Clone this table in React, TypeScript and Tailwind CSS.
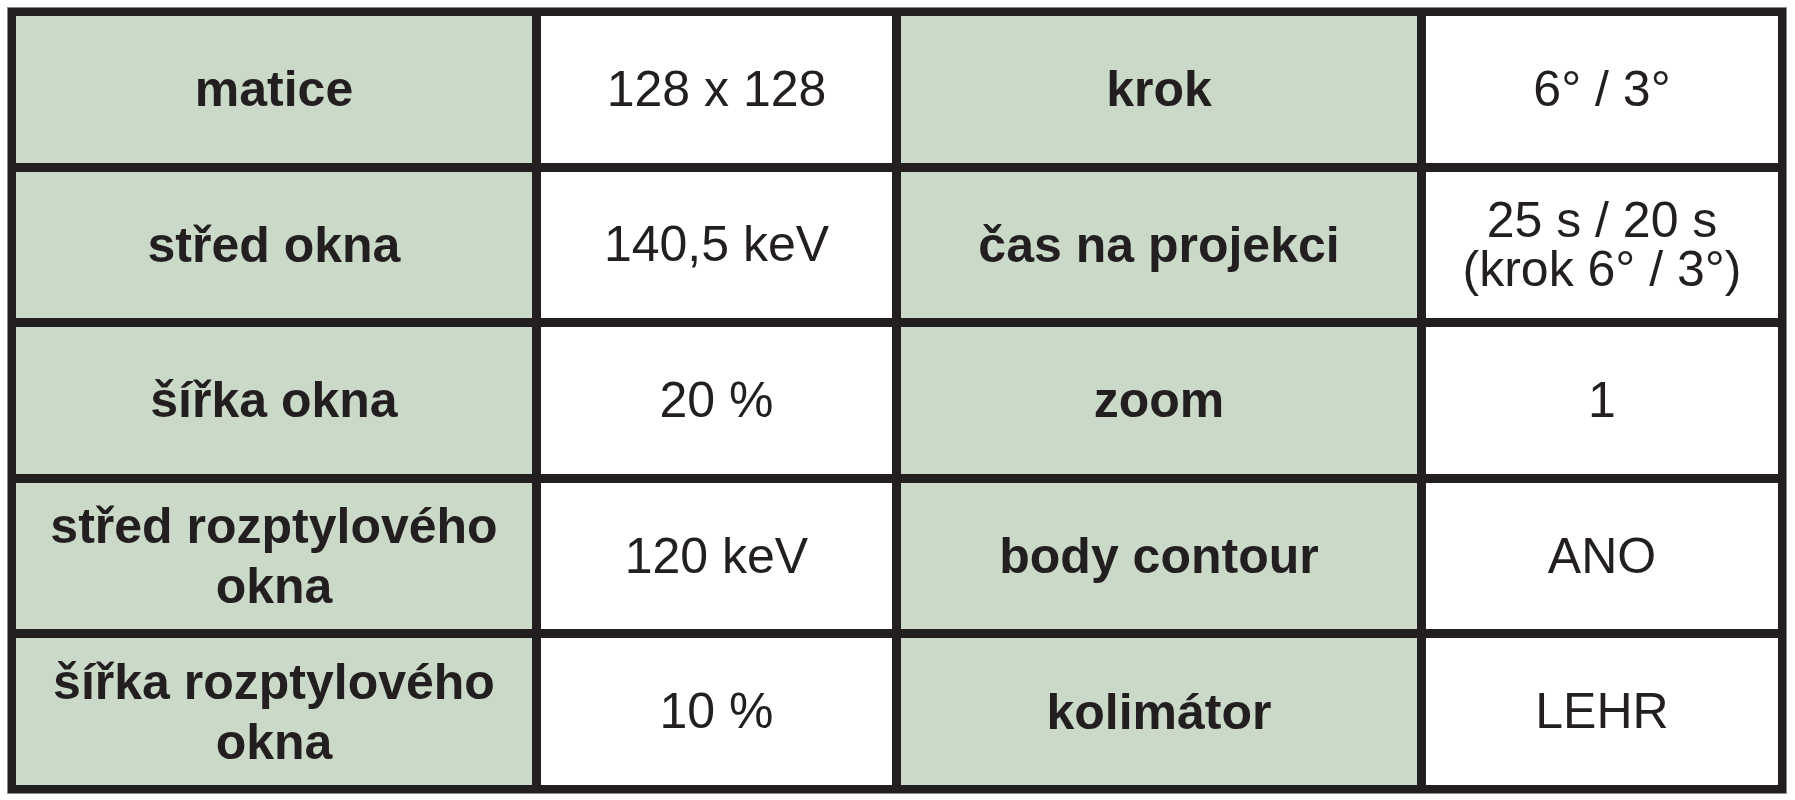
import React from 'react';

type Cell = { text: string[]; label?: boolean };

const rows: Cell[][] = [
  [
    { text: ['matice'], label: true },
    { text: ['128 x 128'] },
    { text: ['krok'], label: true },
    { text: ['6° / 3°'] },
  ],
  [
    { text: ['střed okna'], label: true },
    { text: ['140,5 keV'] },
    { text: ['čas na projekci'], label: true },
    { text: ['25 s / 20 s', '(krok 6° / 3°)'] },
  ],
  [
    { text: ['šířka okna'], label: true },
    { text: ['20 %'] },
    { text: ['zoom'], label: true },
    { text: ['1'] },
  ],
  [
    { text: ['střed rozptylového', 'okna'], label: true },
    { text: ['120 keV'] },
    { text: ['body contour'], label: true },
    { text: ['ANO'] },
  ],
  [
    { text: ['šířka rozptylového', 'okna'], label: true },
    { text: ['10 %'] },
    { text: ['kolimátor'], label: true },
    { text: ['LEHR'] },
  ],
];

const TableCell = ({ cell }: { cell: Cell }) => (
  <div
    className={
      cell.label
        ? 'flex flex-col items-center justify-center bg-[#cbd9c9] font-bold leading-[60px]'
        : 'flex flex-col items-center justify-center bg-white font-normal leading-[49px]'
    }
  >
    {cell.text.map((line, i) => (
      <span key={i} className="whitespace-nowrap">
        {line}
      </span>
    ))}
  </div>
);

export default function App() {
  return (
    <div className="min-h-screen bg-white pt-2 pl-2 font-['Liberation_Sans',Arial,sans-serif] text-[50px] text-[#231f20]">
      {/* Acquisition parameters table */}
      <div className="grid h-[785px] w-[1778px] grid-cols-[516px_351px_516px_352px] grid-rows-5 gap-[9px] bg-[#231f20] p-2 shadow-[0_0_0_1px_#8a8a8a]">
        {rows.flatMap((row, r) =>
          row.map((cell, c) => <TableCell key={`${r}-${c}`} cell={cell} />)
        )}
      </div>
    </div>
  );
}
